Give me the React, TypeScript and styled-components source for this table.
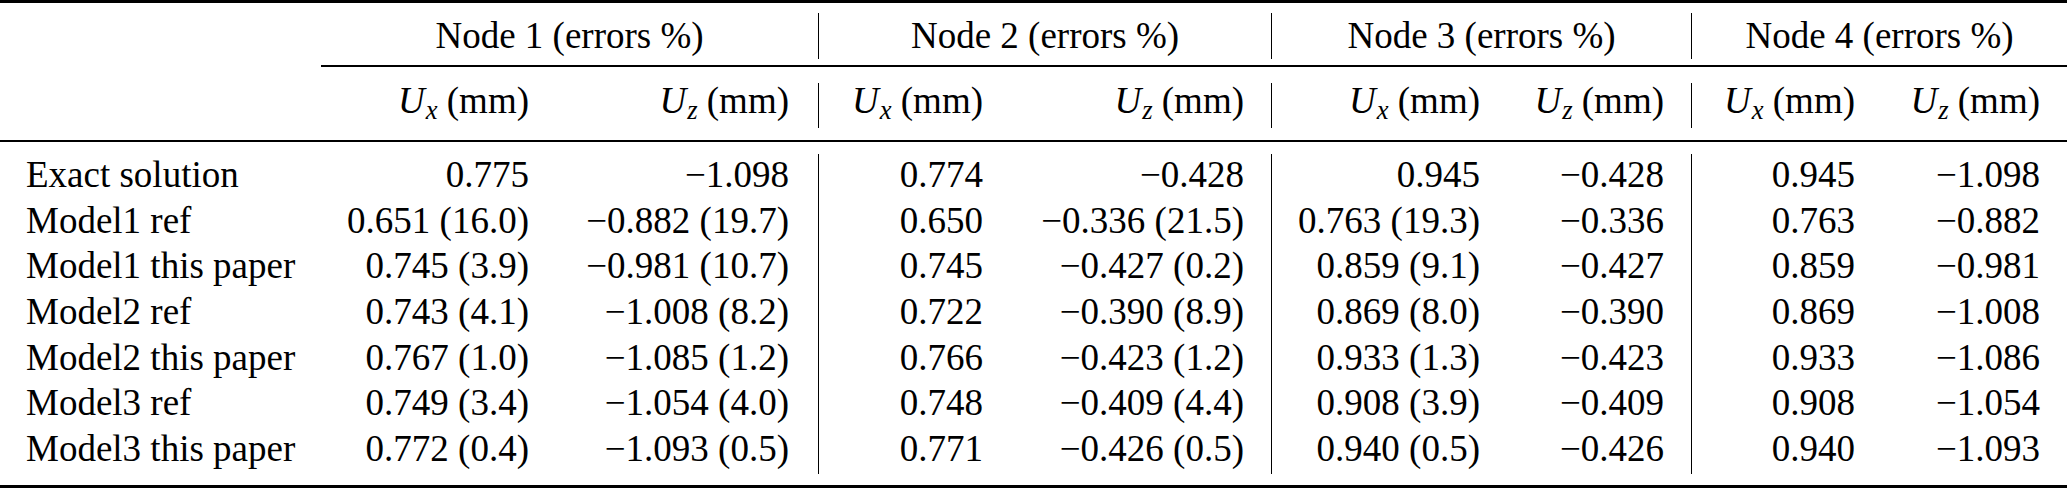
import React from 'react';
import styled, { createGlobalStyle } from 'styled-components';

const GlobalStyle = createGlobalStyle`
  html, body {
    margin: 0;
    padding: 0;
    background: #fff;
  }
  body {
    font-family: "Liberation Serif", "Times New Roman", serif;
    color: #000;
  }
`;

const Table = styled.table`
  width: 2067px;
  table-layout: fixed;
  border-collapse: separate;
  border-spacing: 0;
  font-size: 37px;
`;

const RuleRow = styled.tr<{ $h: number }>`
  height: ${({ $h }) => $h}px;
`;

const RuleCell = styled.td`
  padding: 0;
  vertical-align: top;
`;

const Rule = styled.div<{ $top: number; $thick: number }>`
  margin-top: ${({ $top }) => $top}px;
  height: ${({ $thick }) => $thick}px;
  background: #000;
`;

const Row = styled.tr<{ $h: number }>`
  height: ${({ $h }) => $h}px;
`;

const Cell = styled.td<{ $pad?: number; $sep?: boolean; $lh?: number }>`
  padding: 0 ${({ $pad }) => $pad ?? 27}px 0 0;
  text-align: right;
  vertical-align: top;
  white-space: nowrap;
  line-height: ${({ $lh }) => $lh ?? 41}px;
  border-right: ${({ $sep }) => ($sep ? '1.5px solid #000' : 'none')};
`;

const LabelCell = styled.td`
  padding: 0 0 0 26px;
  text-align: left;
  vertical-align: top;
  white-space: nowrap;
  line-height: 41px;
`;

const GroupCell = styled.td<{ $sep?: boolean }>`
  padding: 0;
  text-align: center;
  vertical-align: top;
  white-space: nowrap;
  line-height: 45px;
  border-right: ${({ $sep }) => ($sep ? '1.5px solid #000' : 'none')};
`;

const Sym = styled.i`
  font-style: italic;
`;

const Sub = styled.sub`
  font-size: 0.72em;
  font-style: italic;
  vertical-align: -6px;
  line-height: 0;
  margin-left: 1px;
`;

const colWidths = [321, 235, 263, 191, 262, 235, 185, 190, 185];
// columns that carry a vertical rule on their right side
const sepCols = [2, 4, 6];
const padFor = (i: number) => (i === 2 ? 29 : 27);

const rows: [string, string[]][] = [
  ['Exact solution', ['0.775', '−1.098', '0.774', '−0.428', '0.945', '−0.428', '0.945', '−1.098']],
  ['Model1 ref', ['0.651 (16.0)', '−0.882 (19.7)', '0.650', '−0.336 (21.5)', '0.763 (19.3)', '−0.336', '0.763', '−0.882']],
  ['Model1 this paper', ['0.745 (3.9)', '−0.981 (10.7)', '0.745', '−0.427 (0.2)', '0.859 (9.1)', '−0.427', '0.859', '−0.981']],
  ['Model2 ref', ['0.743 (4.1)', '−1.008 (8.2)', '0.722', '−0.390 (8.9)', '0.869 (8.0)', '−0.390', '0.869', '−1.008']],
  ['Model2 this paper', ['0.767 (1.0)', '−1.085 (1.2)', '0.766', '−0.423 (1.2)', '0.933 (1.3)', '−0.423', '0.933', '−1.086']],
  ['Model3 ref', ['0.749 (3.4)', '−1.054 (4.0)', '0.748', '−0.409 (4.4)', '0.908 (3.9)', '−0.409', '0.908', '−1.054']],
  ['Model3 this paper', ['0.772 (0.4)', '−1.093 (0.5)', '0.771', '−0.426 (0.5)', '0.940 (0.5)', '−0.426', '0.940', '−1.093']],
];

const Unit: React.FC<{ axis: string }> = ({ axis }) => (
  <>
    <Sym>U</Sym>
    <Sub>{axis}</Sub> (mm)
  </>
);

const App: React.FC = () => {
  return (
    <>
      <GlobalStyle />
      <Table>
        <colgroup>
          {colWidths.map((w, i) => (
            <col key={i} style={{ width: w }} />
          ))}
        </colgroup>
        <tbody>
          <RuleRow $h={13}>
            <RuleCell colSpan={9}>
              <Rule $top={0} $thick={2.5} />
            </RuleCell>
          </RuleRow>
          <Row $h={46}>
            <LabelCell />
            {[1, 2, 3, 4].map((n) => (
              <GroupCell key={n} colSpan={2} $sep={n < 4}>
                Node {n} (errors %)
              </GroupCell>
            ))}
          </Row>
          <RuleRow $h={24}>
            <RuleCell />
            <RuleCell colSpan={8}>
              <Rule $top={6} $thick={1.5} />
            </RuleCell>
          </RuleRow>
          <Row $h={45}>
            <LabelCell />
            {[1, 2, 3, 4, 5, 6, 7, 8].map((i) => (
              <Cell key={i} $lh={35} $pad={padFor(i)} $sep={sepCols.includes(i)}>
                <Unit axis={i % 2 === 1 ? 'x' : 'z'} />
              </Cell>
            ))}
          </Row>
          <RuleRow $h={26}>
            <RuleCell colSpan={9}>
              <Rule $top={12} $thick={2} />
            </RuleCell>
          </RuleRow>
          {rows.map(([label, values]) => (
            <Row key={label} $h={45.7}>
              <LabelCell>{label}</LabelCell>
              {values.map((v, j) => (
                <Cell key={j} $pad={padFor(j + 1)} $sep={sepCols.includes(j + 1)}>
                  {v}
                </Cell>
              ))}
            </Row>
          ))}
          <RuleRow $h={14}>
            <RuleCell colSpan={9}>
              <Rule $top={11} $thick={3} />
            </RuleCell>
          </RuleRow>
        </tbody>
      </Table>
    </>
  );
};

export default App;
